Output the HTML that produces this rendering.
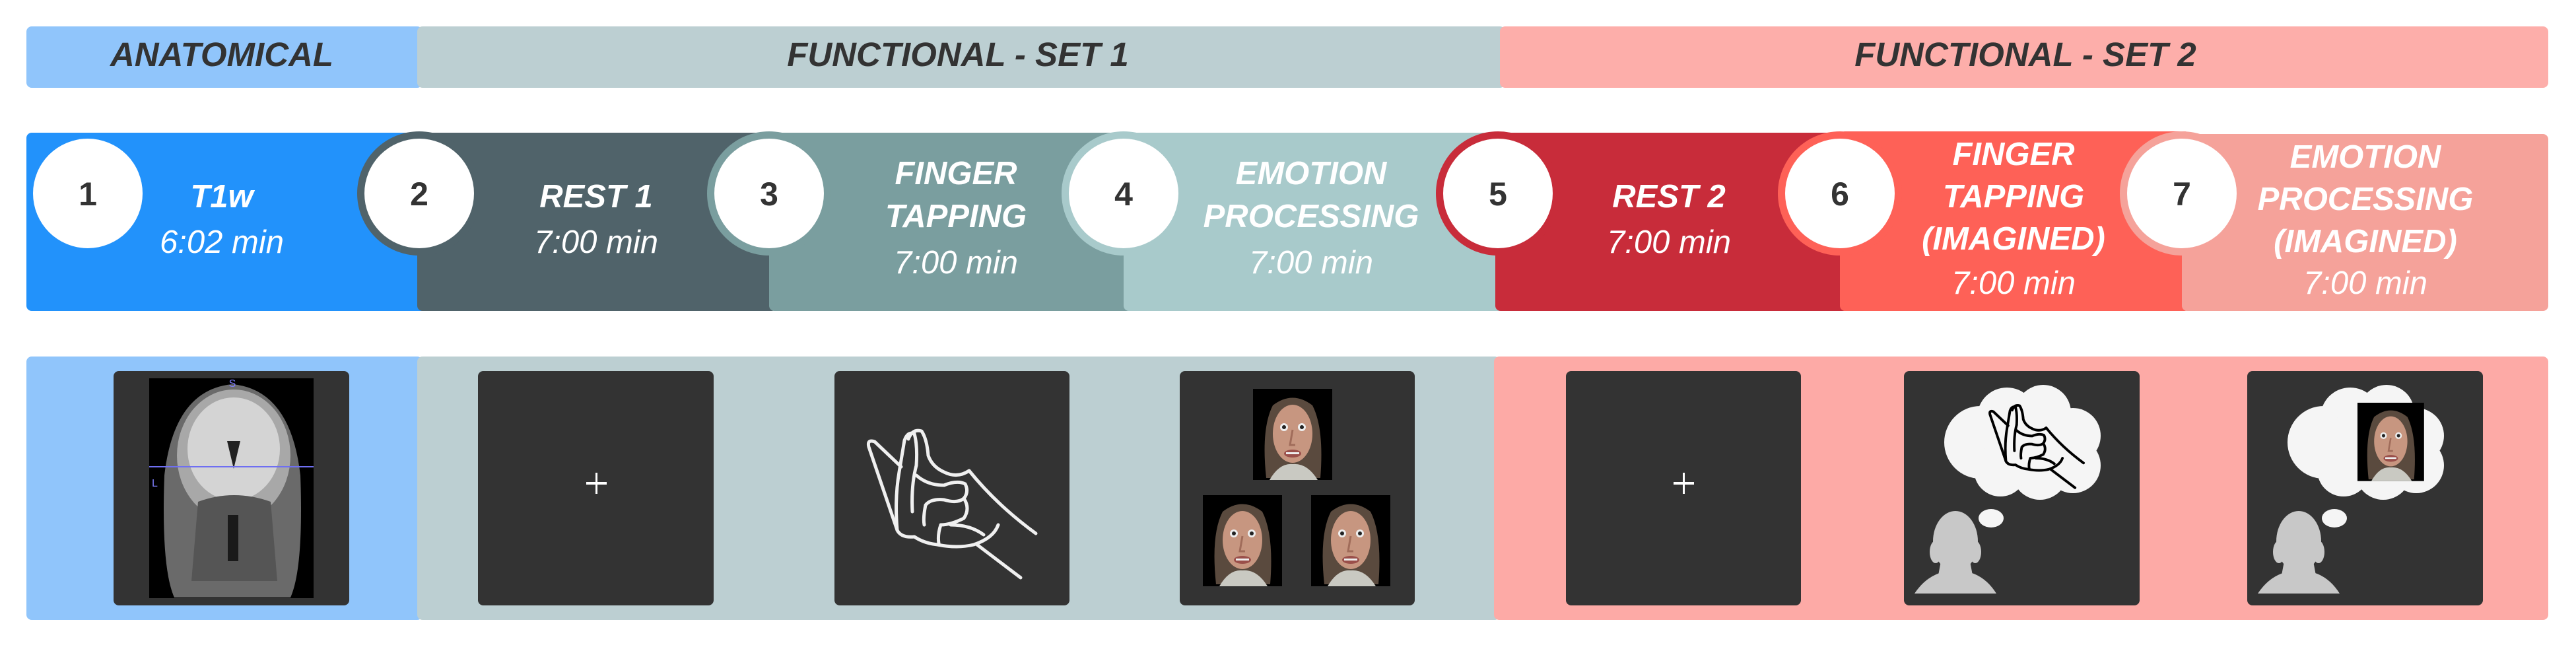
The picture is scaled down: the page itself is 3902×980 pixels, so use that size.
<!DOCTYPE html>
<html><head><meta charset="utf-8"><style>
html,body{margin:0;padding:0;background:#fff;width:3902px;height:980px;overflow:hidden}
svg{display:block}
.h{font-family:"Liberation Sans",sans-serif;font-weight:bold;font-style:italic;font-size:51px;fill:#333;text-anchor:middle}
.t{font-family:"Liberation Sans",sans-serif;font-weight:bold;font-style:italic;font-size:49px;fill:#fff;text-anchor:middle}
.m{font-family:"Liberation Sans",sans-serif;font-style:italic;font-size:49px;fill:#fff;text-anchor:middle}
.n{font-family:"Liberation Sans",sans-serif;font-weight:bold;font-size:50px;fill:#333;text-anchor:middle}
</style></head><body>
<svg width="3902" height="980" viewBox="0 0 3902 980" xmlns="http://www.w3.org/2000/svg">
<defs>
<g id="hand" fill="none" stroke-linecap="round" stroke-linejoin="round">
<path d="M49,158 L6,32 Q3,20 15,24 L55,62"/>
<path d="M49,158 Q45,110 52,70 L60,22 Q65,8 75,12 Q80,30 78,60"/>
<path d="M66,20 Q72,4 86,8 Q94,20 96,45 Q102,62 120,70 Q140,80 158,68"/>
<path d="M158,68 Q200,120 259,163"/>
<path d="M78,60 Q70,90 72,130"/>
<path d="M78,75 Q95,90 120,90 Q140,82 152,88 Q158,100 150,110 Q140,118 120,112 Q100,110 92,120 Q88,140 90,150"/>
<path d="M150,110 Q160,125 150,140 Q130,150 115,150 Q110,165 112,178"/>
<path d="M130,150 Q160,150 180,165"/>
<path d="M49,158 Q55,170 75,168 Q90,178 110,180 Q140,186 165,180 Q195,170 202,150"/>
<path d="M170,180 L236,230"/>
</g>
<g id="face">
<rect x="0" y="0" width="120" height="138" fill="#000"/>
<path d="M20,135 Q12,60 30,25 Q60,2 90,25 Q108,60 102,135 Z" fill="#5a4a3e"/>
<ellipse cx="60" cy="68" rx="30" ry="44" fill="#c79680"/>
<path d="M25,138 Q40,112 60,114 Q82,112 98,138 Z" fill="#c9c9c2"/>
<circle cx="47" cy="58" r="6" fill="#eee"/><circle cx="47" cy="58" r="3" fill="#222"/>
<circle cx="74" cy="58" r="6" fill="#eee"/><circle cx="74" cy="58" r="3" fill="#222"/>
<path d="M60,62 L56,85 L64,85" fill="none" stroke="#a06c5a" stroke-width="3"/>
<ellipse cx="60" cy="98" rx="13" ry="6" fill="#9a4f4a"/><rect x="50" y="96" width="20" height="3" fill="#eee"/>
</g>
<g id="cloud" fill="#f5f5f5">
<circle cx="3000" cy="670" r="55"/><circle cx="3040" cy="632" r="45"/><circle cx="3095" cy="625" r="42"/>
<circle cx="3140" cy="660" r="42"/><circle cx="3140" cy="705" r="42"/><circle cx="3090" cy="715" r="42"/>
<circle cx="3030" cy="712" r="40"/><circle cx="3070" cy="670" r="62"/>
<ellipse cx="3016" cy="785" rx="19" ry="14"/><ellipse cx="2974" cy="824" rx="11" ry="14"/>
</g>
<g id="head" fill="#c8c8c8">
<ellipse cx="2962" cy="820" rx="34" ry="46"/>
<ellipse cx="2932" cy="836" rx="9" ry="17"/><ellipse cx="2992" cy="836" rx="9" ry="17"/>
<path d="M2940,850 L2984,850 L2990,882 L2934,882 Z"/>
<path d="M2900,899 Q2918,872 2945,866 L2980,866 Q3007,872 3024,899 Z"/>
</g>
</defs>

<rect x="40" y="40" width="600" height="93" rx="8" fill="#90c5fb"/>
<rect x="632" y="40" width="1648" height="93" rx="8" fill="#bccfd2"/>
<rect x="2272" y="40" width="1588" height="93" rx="8" fill="#fdaeaa"/>
<text class="h" x="336" y="100">ANATOMICAL</text>
<text class="h" x="1451" y="100">FUNCTIONAL - SET 1</text>
<text class="h" x="3068" y="100">FUNCTIONAL - SET 2</text>

<rect x="40" y="201" width="610" height="270" rx="8" fill="#2292fb"/>
<rect x="632" y="201" width="545" height="270" rx="8" fill="#50636a"/>
<rect x="1165" y="201" width="552" height="270" rx="8" fill="#7a9e9f"/>
<rect x="1702" y="201" width="575" height="270" rx="8" fill="#a8cacb"/>
<rect x="2265" y="201" width="535" height="270" rx="8" fill="#c82c3a"/>
<rect x="2787" y="199" width="530" height="272" rx="8" fill="#fe6157"/>
<rect x="3305" y="203" width="555" height="268" rx="8" fill="#f5a29a"/>

<circle cx="133" cy="293" r="83" fill="#fff"/><text class="n" x="133" y="311">1</text>
<circle cx="635" cy="293" r="94" fill="#50636a"/><circle cx="635" cy="293" r="83" fill="#fff"/><text class="n" x="635" y="311">2</text>
<circle cx="1165" cy="293" r="94" fill="#7a9e9f"/><circle cx="1165" cy="293" r="83" fill="#fff"/><text class="n" x="1165" y="311">3</text>
<circle cx="1702" cy="293" r="94" fill="#a8cacb"/><circle cx="1702" cy="293" r="83" fill="#fff"/><text class="n" x="1702" y="311">4</text>
<circle cx="2269" cy="293" r="94" fill="#c82c3a"/><circle cx="2269" cy="293" r="83" fill="#fff"/><text class="n" x="2269" y="311">5</text>
<circle cx="2787" cy="293" r="94" fill="#fe6157"/><circle cx="2787" cy="293" r="83" fill="#fff"/><text class="n" x="2787" y="311">6</text>
<circle cx="3305" cy="293" r="94" fill="#f5a29a"/><circle cx="3305" cy="293" r="83" fill="#fff"/><text class="n" x="3305" y="311">7</text>

<text class="t" x="336" y="314">T1w</text><text class="m" x="336" y="383">6:02 min</text>
<text class="t" x="903" y="314">REST 1</text><text class="m" x="903" y="383">7:00 min</text>
<text class="t" x="1448" y="279">FINGER</text><text class="t" x="1448" y="344">TAPPING</text><text class="m" x="1448" y="414">7:00 min</text>
<text class="t" x="1986" y="279">EMOTION</text><text class="t" x="1986" y="344">PROCESSING</text><text class="m" x="1986" y="414">7:00 min</text>
<text class="t" x="2528" y="314">REST 2</text><text class="m" x="2528" y="383">7:00 min</text>
<text class="t" x="3050" y="250">FINGER</text><text class="t" x="3050" y="314">TAPPING</text><text class="t" x="3050" y="378">(IMAGINED)</text><text class="m" x="3050" y="445">7:00 min</text>
<text class="t" x="3583" y="254">EMOTION</text><text class="t" x="3583" y="318">PROCESSING</text><text class="t" x="3583" y="382">(IMAGINED)</text><text class="m" x="3583" y="445">7:00 min</text>

<rect x="40" y="540" width="600" height="399" rx="8" fill="#90c5fb"/>
<rect x="632" y="540" width="1640" height="399" rx="8" fill="#bccfd2"/>
<rect x="2263" y="540" width="1597" height="399" rx="8" fill="#fdaaa6"/>

<rect x="172" y="562" width="357" height="355" rx="8" fill="#333"/>
<rect x="724" y="562" width="357" height="355" rx="8" fill="#333"/>
<rect x="1264" y="562" width="356" height="355" rx="8" fill="#333"/>
<rect x="1787" y="562" width="356" height="355" rx="8" fill="#333"/>
<rect x="2372" y="562" width="356" height="355" rx="8" fill="#333"/>
<rect x="2884" y="562" width="357" height="355" rx="8" fill="#333"/>
<rect x="3404" y="562" width="357" height="355" rx="8" fill="#333"/>

<!-- brain -->
<rect x="226" y="573" width="249" height="333" fill="#000"/>
<path d="M352,582 Q440,590 455,720 Q460,860 440,905 L264,905 Q244,860 249,720 Q264,590 352,582 Z" fill="#6a6a6a"/>
<ellipse cx="354" cy="690" rx="86" ry="100" fill="#a8a8a8"/>
<ellipse cx="354" cy="680" rx="70" ry="78" fill="#d4d4d4"/>
<path d="M344,668 L354,710 L364,668 Z" fill="#222"/>
<path d="M300,760 Q354,740 410,760 L420,880 L290,880 Z" fill="#555"/>
<rect x="345" y="780" width="16" height="70" fill="#1a1a1a"/>
<rect x="226" y="706" width="249" height="2" fill="#6f6ff2"/>
<text x="352" y="586" font-family="Liberation Sans,sans-serif" font-size="16" fill="#7f7fff" text-anchor="middle">S</text>
<text x="230" y="737" font-family="Liberation Sans,sans-serif" font-size="16" fill="#7f7fff">L</text>

<rect x="902" y="716" width="3" height="32" fill="#fff"/><rect x="888" y="730" width="31" height="4" fill="#fff"/>
<rect x="2549" y="716" width="3" height="32" fill="#fff"/><rect x="2535" y="730" width="31" height="4" fill="#fff"/>

<g transform="translate(1310,645)" stroke="#f0f0f0" stroke-width="5"><use href="#hand"/></g>

<g transform="translate(1898,589)"><use href="#face"/></g>
<g transform="translate(1822,750)"><use href="#face"/></g>
<g transform="translate(1986,750)"><use href="#face"/></g>

<use href="#cloud"/><use href="#head"/>
<g transform="translate(3011,610) scale(0.56)" stroke="#000" stroke-width="7"><use href="#hand"/></g>
<g transform="translate(520,0)"><use href="#cloud"/><use href="#head"/></g>
<g transform="translate(3571,610) scale(0.84,0.86)"><use href="#face"/></g>
</svg>
</body></html>
